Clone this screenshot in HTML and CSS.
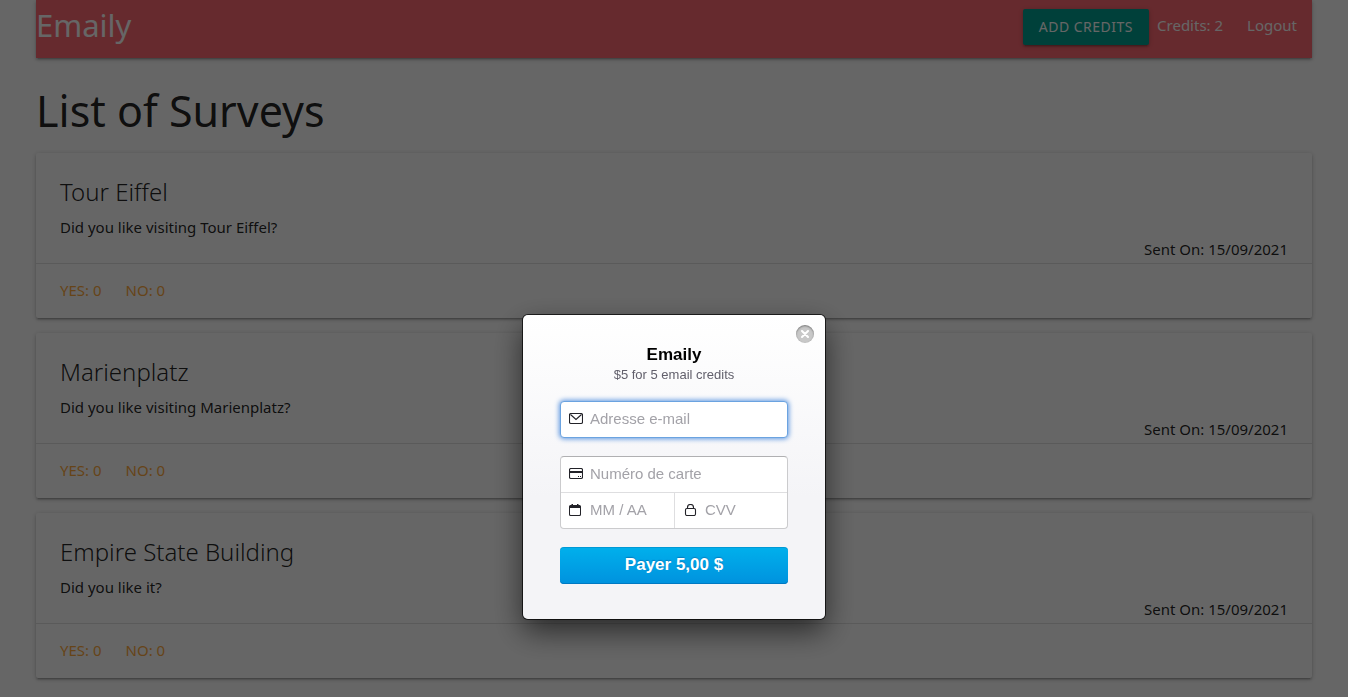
FILE: index.html
```
<!DOCTYPE html>
<html lang="en">
<head>
<meta charset="utf-8">
<title>Emaily</title>
<link rel="stylesheet" href="styles.css">
</head>
<body>
<div class="page">
  <nav class="navbar">
    <a class="brand" href="#">Emaily</a>
    <div class="nav-links">
      <button class="add-credits" type="button">Add credits</button>
      <span class="credits">Credits: 2</span>
      <a class="logout" href="#">Logout</a>
    </div>
  </nav>
  <main>
    <h1 class="heading">List of Surveys</h1>
    <article class="card">
      <div class="card-content">
        <h2 class="card-title">Tour Eiffel</h2>
        <p>Did you like visiting Tour Eiffel?</p>
        <p class="sent">Sent On: 15/09/2021</p>
      </div>
      <div class="card-action"><a href="#">Yes: 0</a><a href="#">No: 0</a></div>
    </article>
    <article class="card">
      <div class="card-content">
        <h2 class="card-title">Marienplatz</h2>
        <p>Did you like visiting Marienplatz?</p>
        <p class="sent">Sent On: 15/09/2021</p>
      </div>
      <div class="card-action"><a href="#">Yes: 0</a><a href="#">No: 0</a></div>
    </article>
    <article class="card">
      <div class="card-content">
        <h2 class="card-title">Empire State Building</h2>
        <p>Did you like it?</p>
        <p class="sent">Sent On: 15/09/2021</p>
      </div>
      <div class="card-action"><a href="#">Yes: 0</a><a href="#">No: 0</a></div>
    </article>
  </main>
</div>

<div class="overlay">
  <form class="checkout" role="dialog" aria-labelledby="checkout-title">
    <button class="close" type="button" aria-label="Close">
      <svg width="8" height="8" viewBox="0 0 8 8"><path d="M1 1l6 6M7 1L1 7" stroke="#fff" stroke-width="2" stroke-linecap="round"/></svg>
    </button>
    <h2 class="checkout-title" id="checkout-title">Emaily</h2>
    <p class="checkout-text">$5 for 5 email credits</p>
    <label class="field email">
      <svg class="icon" viewBox="0 0 14 12"><rect x=".5" y=".5" width="13" height="10" rx="1.4" fill="none" stroke="#222228" stroke-width="1.1"/><path d="M1.500 1.500L7 6.500l5.500-5" fill="none" stroke="#222228" stroke-width="1.100"/></svg>
      <input type="email" placeholder="Adresse e-mail" aria-label="Adresse e-mail">
    </label>
    <div class="card-fields">
      <label class="field number">
        <svg class="icon" viewBox="0 0 14 12"><rect x=".5" y=".5" width="13" height="10" rx="1.400" fill="none" stroke="#222228" stroke-width="1.100"/><path d="M0 3h14v2H0zM9 8h1v1H9zM11 8h1v1h-1z" fill="#222228"/></svg>
        <input type="text" placeholder="Numéro de carte" aria-label="Numéro de carte">
      </label>
      <label class="field">
        <svg class="icon" viewBox="0 0 14 12"><path d="M1.500 1h1V0h1.500v1h4V0h1.500v1h1A1.500 1.500 0 0 1 12 2.500v8a1.500 1.500 0 0 1-1.500 1.500h-9A1.500 1.500 0 0 1 0 10.500v-8A1.500 1.500 0 0 1 1.500 1zM1 4v6.300q0 .7.700.700h8.600q.7 0 .7-.700V4z" fill="#222228" fill-rule="evenodd"/></svg>
        <input type="text" placeholder="MM / AA" aria-label="MM / AA">
      </label>
      <label class="field cvv">
        <svg class="icon" viewBox="0 0 14 12"><rect x="1.500" y="4.500" width="10" height="7" rx="1.400" fill="none" stroke="#222228" stroke-width="1.100"/><path d="M3.500 4.500V3.500a3 3 0 0 1 6 0v1" fill="none" stroke="#222228" stroke-width="1.100"/></svg>
        <input type="text" placeholder="CVV" aria-label="CVV">
      </label>
    </div>
    <button class="pay" type="submit">Payer 5,00 $</button>
  </form>
</div>
</body>
</html>
```
FILE: styles.css
```
* {
  box-sizing: border-box;
}

body {
  margin: 0;
  overflow: hidden;
  background: #fff;
  color: rgba(0, 0, 0, 0.87);
  font: 15px/22px "Noto Sans", "Open Sans", sans-serif;
}

a {
  color: inherit;
  text-decoration: none;
}

h1,
h2,
p {
  margin: 0;
}

.page {
  height: 100vh;
  overflow: hidden;
  padding: 0 36px;
}

.navbar {
  display: flex;
  justify-content: space-between;
  height: 58px;
  padding-right: 15px;
  background: #ff6973;
  color: #fff;
  box-shadow: 0 2px 2px rgba(0, 0, 0, 0.14), 0 3px 1px -2px rgba(0, 0, 0, 0.12), 0 1px 5px rgba(0, 0, 0, 0.2);
}

.brand {
  font-size: 31px;
  line-height: 50px;
}

.nav-links {
  display: flex;
  align-items: center;
  height: 50px;
}

.add-credits {
  height: 36px;
  margin-top: 4px;
  padding: 0 16px;
  border: 0;
  border-radius: 2px;
  background: #00a192;
  color: #fff;
  font: inherit;
  font-size: 14px;
  letter-spacing: 0.5px;
  text-transform: uppercase;
  box-shadow: 0 2px 2px rgba(0, 0, 0, 0.14), 0 3px 1px -2px rgba(0, 0, 0, 0.12), 0 1px 5px rgba(0, 0, 0, 0.2);
}

.credits {
  margin: 0 24px 0 8px;
}

.heading {
  margin: 28px 0 18px;
  font-size: 43px;
  font-weight: 400;
  line-height: 49px;
}

.card {
  margin-bottom: 15px;
  border-radius: 2px;
  background: #fff;
  box-shadow: 0 2px 2px rgba(0, 0, 0, 0.14), 0 3px 1px -2px rgba(0, 0, 0, 0.12), 0 1px 5px rgba(0, 0, 0, 0.2);
}

.card-content {
  padding: 23px 24px 3px;
}

.card-title {
  margin-bottom: 8px;
  font-size: 24px;
  font-weight: 300;
  line-height: 32px;
}

.sent {
  text-align: right;
}

.card-action {
  display: flex;
  gap: 24px;
  padding: 15px 24px 17px;
  border-top: 1px solid rgba(160, 160, 160, 0.3);
  color: #ffab40;
  text-transform: uppercase;
}

.overlay {
  position: fixed;
  inset: 0;
  display: flex;
  justify-content: center;
  align-items: flex-start;
  padding-top: 315px;
  background: rgba(0, 0, 0, 0.6);
  font-family: "Liberation Sans", Arial, sans-serif;
}

.checkout {
  position: relative;
  width: 302px;
  padding: 29px 37px 35px;
  border-radius: 5px;
  background: linear-gradient(#fff, #f4f4f7 60%);
  box-shadow: 0 0 0 1px rgba(0, 0, 0, 0.7), 0 12px 30px rgba(0, 0, 0, 0.6);
  text-align: center;
}

.close {
  position: absolute;
  top: 10px;
  right: 11px;
  display: flex;
  align-items: center;
  justify-content: center;
  width: 18px;
  height: 18px;
  padding: 0;
  border: 0;
  border-radius: 50%;
  background: #c8c8c8;
  box-shadow: inset 0 1px 2px rgba(0, 0, 0, 0.4);
}

.checkout-title {
  color: #000;
  font-size: 17px;
  line-height: 22px;
}

.checkout-text {
  margin-bottom: 17px;
  color: #62606c;
  font-size: 13px;
  line-height: 18px;
}

.field {
  display: flex;
  align-items: center;
  gap: 7px;
  min-width: 0;
  height: 35px;
  padding: 0 0 1px 8px;
}

.icon {
  flex: none;
  width: 14px;
  height: 12px;
}

.field input {
  width: 100%;
  min-width: 0;
  height: 100%;
  padding: 0 0 1px;
  border: 0;
  outline: 0;
  background: transparent;
  color: #222228;
  font: 15px "Liberation Sans", Arial, sans-serif;
}

.field input::placeholder {
  color: #a3a2a8;
  opacity: 1;
}

.email {
  height: 37px;
  margin-bottom: 18px;
  border: 1px solid #6ba3e0;
  border-radius: 4px;
  background: #fff;
  box-shadow: 0 0 5px 1px #5f97e0;
}

.card-fields {
  display: grid;
  grid-template-columns: 1fr 1fr;
  margin-bottom: 18px;
  border: 1px solid #cbcbcd;
  border-top-color: #b0b0b2;
  border-radius: 4px;
  background: #fff;
}

.number {
  grid-column: 1 / -1;
  height: 36px;
  border-bottom: 1px solid #dedee0;
}

.cvv {
  padding-left: 9px;
  border-left: 1px solid #dedee0;
}

.pay {
  width: 100%;
  height: 37px;
  padding: 0 0 2px;
  border: 0;
  border-radius: 4px;
  background: linear-gradient(#00b0ec, #0092de);
  color: #fff;
  font: bold 17px "Liberation Sans", Arial, sans-serif;
  text-shadow: 0 -1px 1px rgba(0, 70, 140, 0.4);
  box-shadow: inset 0 -1px 0 #0079c2, inset 0 1px 0 rgba(0, 120, 180, 0.4);
}
```
